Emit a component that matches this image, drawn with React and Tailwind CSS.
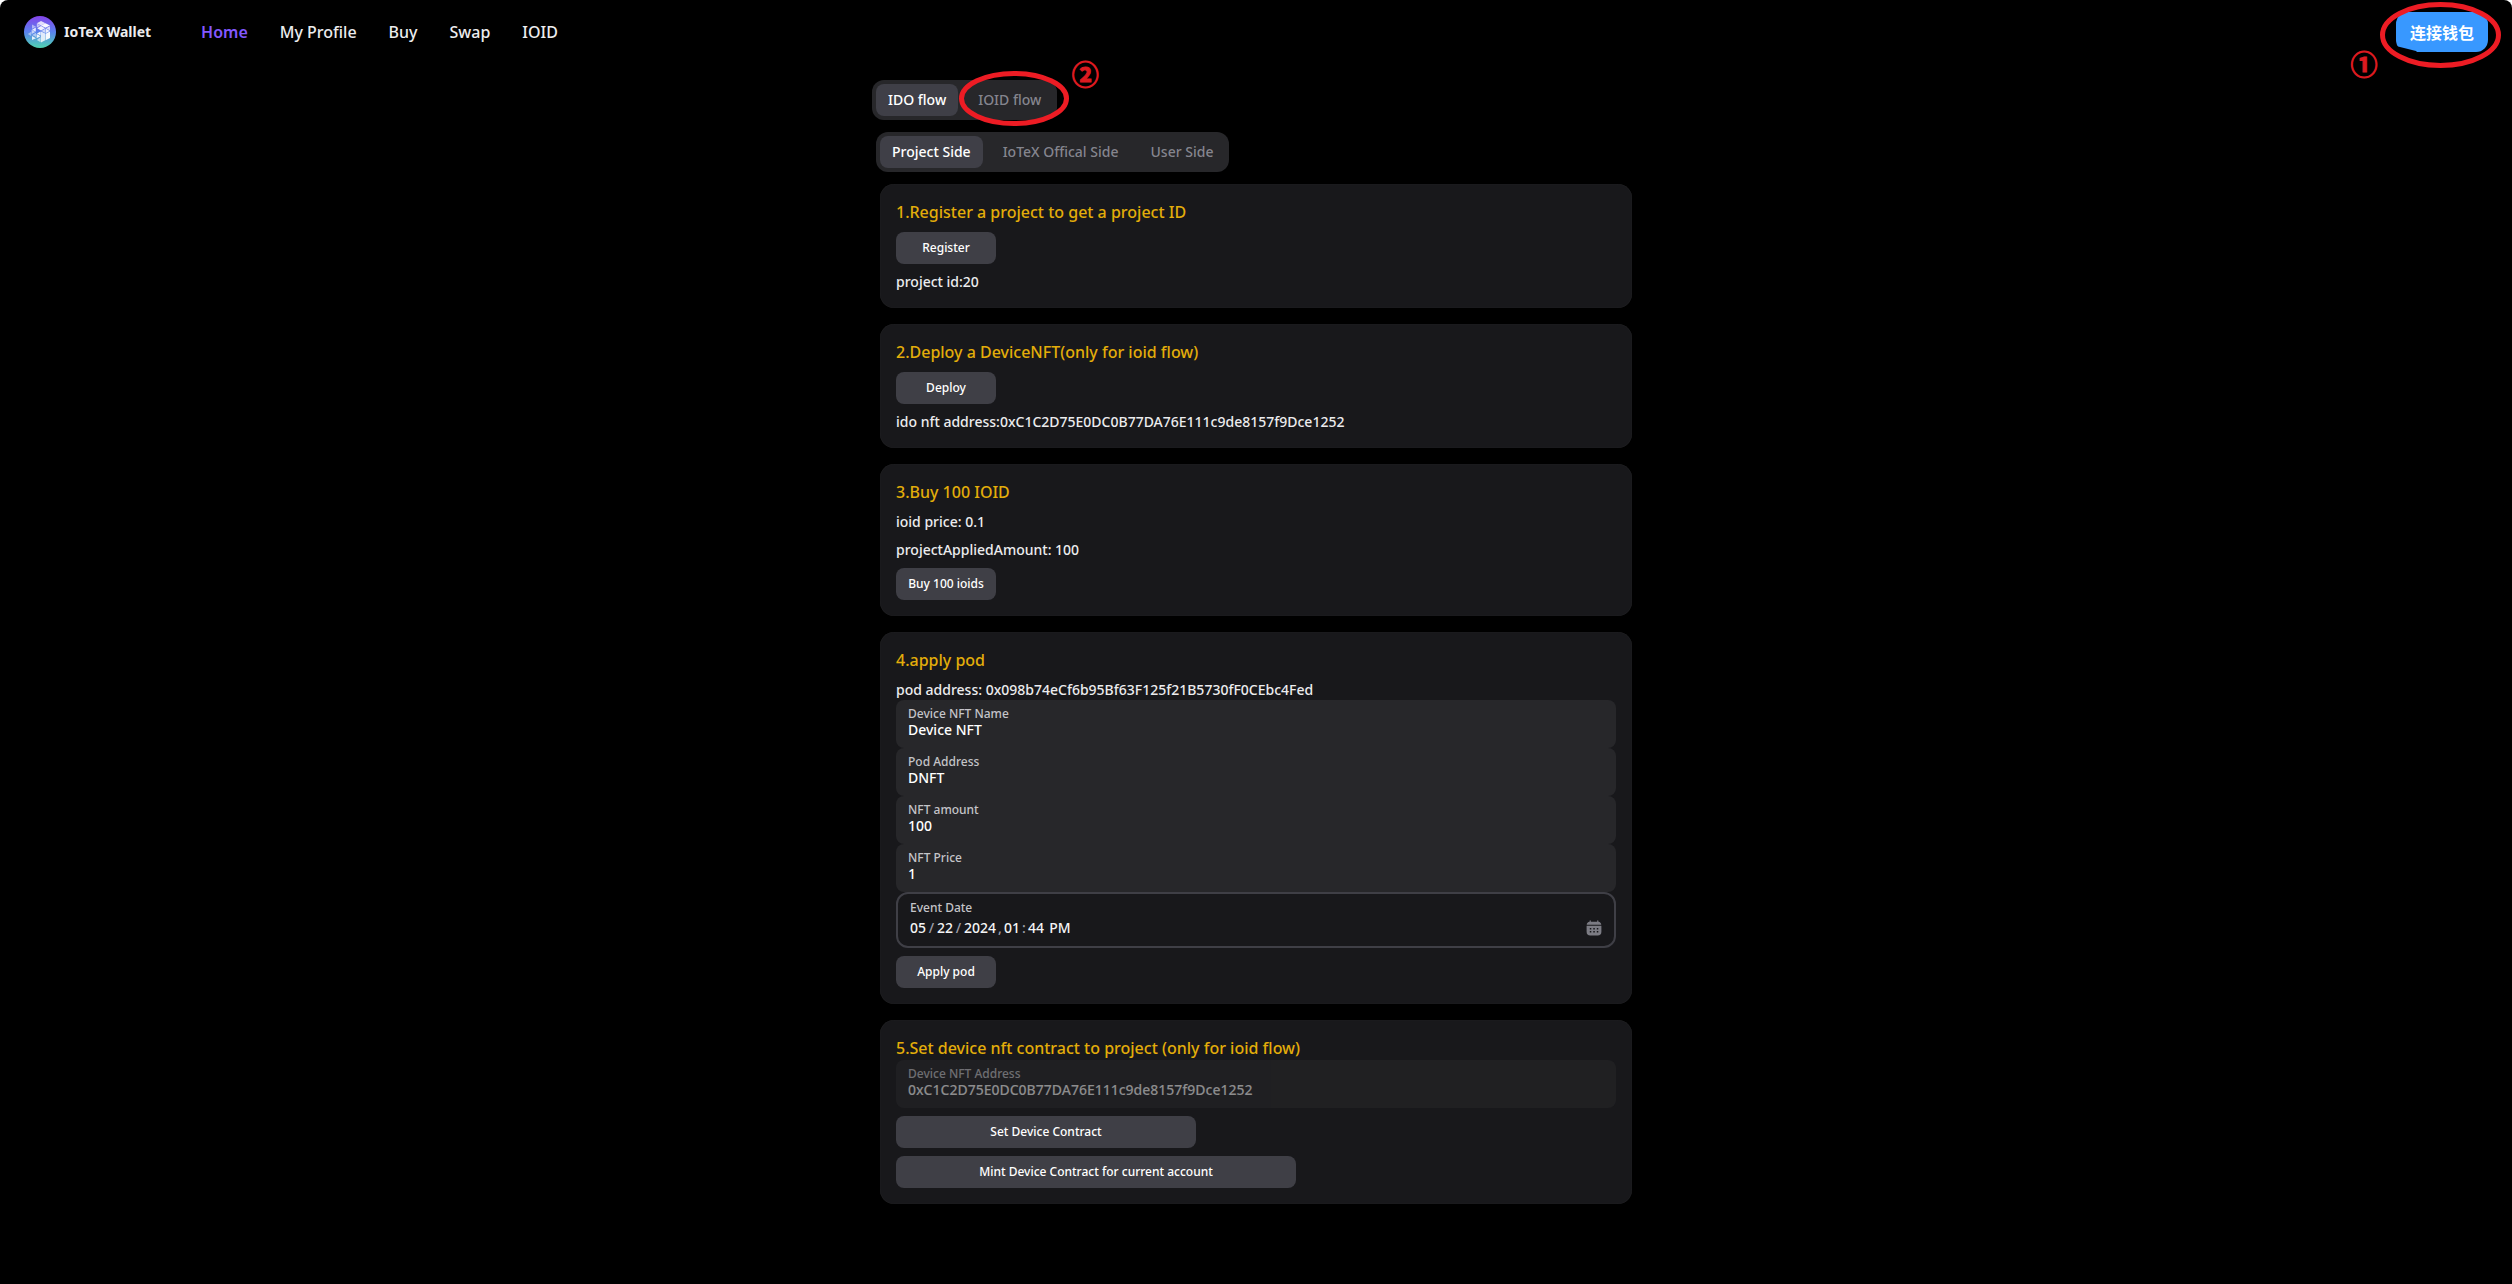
const NAV_ITEMS = ["Home", "My Profile", "Buy", "Swap", "IOID"];

function Logo() {
  return (
    <svg viewBox="0 0 32 32" className="size-8" aria-hidden="true">
      <defs>
        <linearGradient id="logo-bg" x1="0" y1="0" x2="0" y2="1">
          <stop offset="0" stopColor="#8544ea" />
          <stop offset="0.5" stopColor="#5a82ee" />
          <stop offset="1" stopColor="#4fd3b0" />
        </linearGradient>
      </defs>
      <circle cx="16" cy="16" r="16" fill="url(#logo-bg)" />
      <g fill="#fff">
        <path d="M17 5 21.500 7.200 17 9.500 12.800 7.200Z" opacity=".8" />
        <path d="M21.500 7.200 26 9.500 21.500 11.800 17 9.500Z" opacity=".95" />
        <path d="M12.800 7.500 16.500 9.800 12.800 11.500Z" opacity=".6" />
        <path d="M17 10 21 12.200 17 14.500 13.200 12.200Z" opacity=".9" />
        <path d="M26 10.200V14.500L22 12.300Z" opacity=".75" />
        <path d="M21.600 12.600 25.800 15 21.600 17.200Z" opacity=".9" />
        <path d="M21.200 12.800V17L17.400 14.900Z" opacity=".7" />
        <path d="M26 15.500V22L21.600 24.200V17.800Z" opacity=".95" />
        <path d="M17 15.400 21.200 17.600V24.300L17 26.400Z" opacity=".82" />
        <path d="M16.600 15.500V19.500L13 17.500Z" opacity=".95" />
        <path d="M12.600 18 16.600 20.200 12.600 22.200Z" opacity=".9" />
        <path d="M16.600 21V26.200L12.800 24Z" opacity=".6" />
        <path d="M8 8.600 12 10.700 8 12.800Z" opacity=".5" />
        <path d="M11.800 11.600V15.800L8 13.700Z" opacity=".85" />
        <path d="M7.600 13.800 11.400 16 7.600 18Z" opacity=".65" />
        <path d="M7.200 15.800V20L3.800 18Z" opacity=".45" />
        <path d="M12 16.800V20.900L8.200 18.900Z" opacity=".5" />
        <path d="M8 20 12 22.200 8 24Z" opacity=".85" />
      </g>
    </svg>
  );
}

function CalendarIcon() {
  return (
    <svg viewBox="0 0 16 16" className="size-4 text-[#7c7c84]" fill="currentColor" aria-hidden="true">
      <path d="M4.200.3a.6.6 0 0 1 .6.6V1.700h6.400V.9a.6.6 0 0 1 1.200 0v.9c1.700.2 2.700 1.200 2.900 3H.7c.2-1.800 1.200-2.800 2.900-3V.9a.6.6 0 0 1 .6-.6Z" />
      <path
        fillRule="evenodd"
        d="M.6 5.700h14.800v6.100c0 2.500-1.300 3.700-3.700 3.700H4.300C1.900 15.500.6 14.300.6 11.800ZM3.800 7.900v1.500h1.500V7.900Zm3.500 0v1.500h1.500V7.900Zm3.500 0v1.500h1.500V7.900Zm-7 3.200v1.500h1.500v-1.500Zm3.500 0v1.500h1.500v-1.500Zm3.500 0v1.500h1.500v-1.500Z"
      />
    </svg>
  );
}

function Callout({ number, className }) {
  return (
    <span
      className={`pointer-events-none absolute flex size-8 items-center justify-center font-['Noto_Sans_CJK_SC',sans-serif] text-[27px] leading-8 font-bold text-[#dc1a20] [-webkit-text-stroke:1px_#dc1a20] ${className}`}
    >
      {number}
    </span>
  );
}

function Tab({ selected, children }) {
  return (
    <button
      type="button"
      role="tab"
      aria-selected={selected}
      className={`h-8 rounded-lg px-3 ${selected ? "bg-zinc-700 text-white" : "text-zinc-400/80"}`}
    >
      {children}
    </button>
  );
}

function TabList({ label, children }) {
  return (
    <div role="tablist" aria-label={label} className="flex w-fit gap-2 rounded-xl bg-[#27272a] p-1">
      {children}
    </div>
  );
}

function Card({ title, children }) {
  return (
    <section className="rounded-[14px] bg-[#18181b] p-4 shadow-[inset_0_0_1px_rgb(255_255_255/0.15)]">
      <h2 className="text-base leading-6 text-[#e3ad0a]">{title}</h2>
      {children}
    </section>
  );
}

function Action({ className = "w-[100px]", children }) {
  return (
    <button type="button" className={`mt-2 block h-8 rounded-lg bg-[#3f3f46] text-xs text-white ${className}`}>
      {children}
    </button>
  );
}

function Field({ id, label, value, disabled }) {
  return (
    <div className={`h-12 rounded-lg bg-[#27272a] px-3 pt-2 ${disabled ? "opacity-50" : ""}`}>
      <label htmlFor={id} className="block text-xs leading-3 text-[#c4c4c8]">
        {label}
      </label>
      <input
        id={id}
        type="text"
        defaultValue={value}
        disabled={disabled}
        className="block h-5 w-full bg-transparent leading-5 text-white outline-none"
      />
    </div>
  );
}

function Segment({ label, value, className = "w-5" }) {
  return (
    <input
      type="text"
      aria-label={label}
      defaultValue={value}
      className={`h-5 bg-transparent text-center leading-5 text-zinc-100 outline-none ${className}`}
    />
  );
}

function DateField() {
  return (
    <fieldset className="h-14 rounded-xl border-2 border-[#3f3f46] px-3 pt-2">
      <div className="text-xs leading-3 text-[#c4c4c8]" id="event-date">
        Event Date
      </div>
      <div role="group" aria-labelledby="event-date" className="mt-1 flex items-center justify-between">
        <div className="-ml-0.5 flex text-center text-zinc-400">
          <Segment label="Month" value="05" />
          <span className="w-[7px]">/</span>
          <Segment label="Day" value="22" />
          <span className="w-[7px]">/</span>
          <Segment label="Year" value="2024" className="w-9" />
          <span className="w-1">,</span>
          <Segment label="Hour" value="01" />
          <span className="w-1">:</span>
          <Segment label="Minute" value="44" />
          <Segment label="AM or PM" value="PM" className="ml-0.5 w-6" />
        </div>
        <button type="button" aria-label="Open calendar">
          <CalendarIcon />
        </button>
      </div>
    </fieldset>
  );
}

export default function App() {
  return (
    <div className="bg-white">
      <div className="min-h-screen rounded-lg bg-black font-['Noto_Sans','Noto_Sans_CJK_SC',sans-serif] text-sm font-medium text-[#ececee]">
        <header className="flex h-16 items-center px-6">
          <a href="#" className="flex items-center gap-2 font-bold">
            <Logo />
            IoTeX Wallet
          </a>
          <nav className="ml-[50px] flex gap-8 text-base">
            {NAV_ITEMS.map((item, i) => (
              <a key={item} href="#" className={i === 0 ? "font-semibold text-[#8358ff]" : ""}>
                {item}
              </a>
            ))}
          </nav>
          <div className="relative ml-auto">
            <button
              type="button"
              className="h-10 rounded-xl bg-[#3898ff] px-[14px] font-['Noto_Sans_CJK_SC',sans-serif] text-base font-bold text-white"
            >
              连接钱包
            </button>
            <svg viewBox="0 0 121 66" className="pointer-events-none absolute -top-[10px] -left-4 h-[66px] w-[121px]" aria-hidden="true">
              <path d="M16 44 36 49 38 51H16Z" fill="#000" />
              <ellipse cx="60.500" cy="33" rx="58" ry="30.500" fill="none" stroke="#ed1c24" strokeWidth="5" />
            </svg>
            <Callout number="①" className="top-9 -left-12" />
          </div>
        </header>

        <main className="mx-auto max-w-3xl pt-4 pb-16">
          <TabList label="Flow">
            <Tab selected>IDO flow</Tab>
            <div className="relative">
              <Tab>IOID flow</Tab>
              <svg viewBox="0 0 110 55" className="pointer-events-none absolute -top-[13px] -left-[7px] h-[55px] w-[110px]" aria-hidden="true">
                <ellipse cx="55" cy="27.500" rx="52.500" ry="25" fill="none" stroke="#ed1c24" strokeWidth="5" />
              </svg>
              <Callout number="②" className="-top-[26px] left-[103px]" />
            </div>
          </TabList>

          <div role="tabpanel" className="px-1 py-3">
            <TabList label="Side">
              <Tab selected>Project Side</Tab>
              <Tab>IoTeX Offical Side</Tab>
              <Tab>User Side</Tab>
            </TabList>

            <div role="tabpanel" className="flex flex-col gap-4 px-1 py-3">
              <Card title="1.Register a project to get a project ID">
                <Action>Register</Action>
                <p className="mt-2">project id:20</p>
              </Card>

              <Card title="2.Deploy a DeviceNFT(only for ioid flow)">
                <Action>Deploy</Action>
                <p className="mt-2">ido nft address:0xC1C2D75E0DC0B77DA76E111c9de8157f9Dce1252</p>
              </Card>

              <Card title="3.Buy 100 IOID">
                <p className="mt-2">ioid price: 0.1</p>
                <p className="mt-2">projectAppliedAmount: 100</p>
                <Action>Buy 100 ioids</Action>
              </Card>

              <Card title="4.apply pod">
                <p className="mt-2">pod address: 0x098b74eCf6b95Bf63F125f21B5730fF0CEbc4Fed</p>
                <Field id="nft-name" label="Device NFT Name" value="Device NFT" />
                <Field id="pod-address" label="Pod Address" value="DNFT" />
                <Field id="nft-amount" label="NFT amount" value="100" />
                <Field id="nft-price" label="NFT Price" value="1" />
                <DateField />
                <Action>Apply pod</Action>
              </Card>

              <Card title="5.Set device nft contract to project (only for ioid flow)">
                <Field
                  id="nft-address"
                  label="Device NFT Address"
                  value="0xC1C2D75E0DC0B77DA76E111c9de8157f9Dce1252"
                  disabled
                />
                <Action className="w-[300px]">Set Device Contract</Action>
                <Action className="w-[400px]">Mint Device Contract for current account</Action>
              </Card>
            </div>
          </div>
        </main>
      </div>
    </div>
  );
}
